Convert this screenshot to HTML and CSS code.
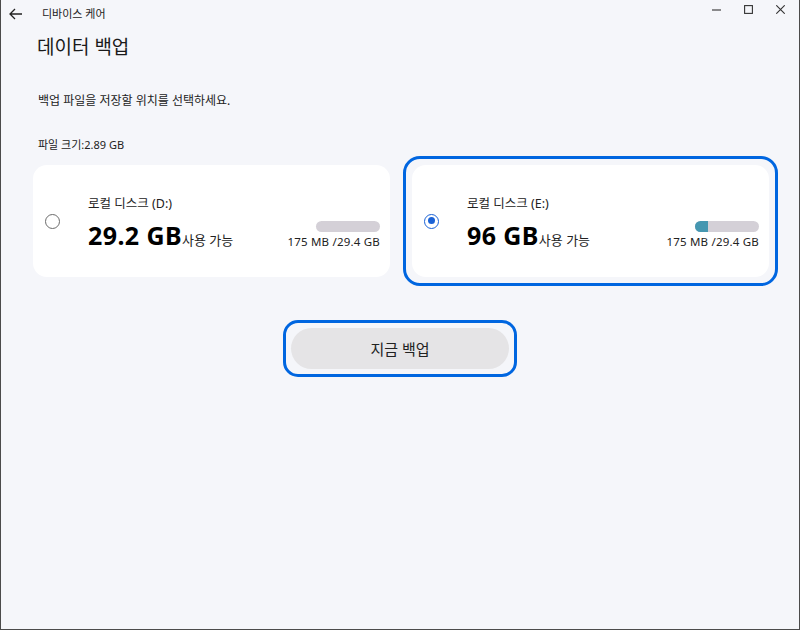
FILE: index.html
```html
<!DOCTYPE html>
<html lang="ko">
<head>
<meta charset="utf-8">
<title>디바이스 케어</title>
<link rel="stylesheet" href="styles.css">
</head>
<body>
<div class="window">
  <header class="titlebar">
    <div class="tb-left">
      <svg class="back" width="14" height="12" viewBox="0 0 14 12"><path d="M13 6H1.5M6 1L1 6l5 5" fill="none" stroke="#222" stroke-width="1.3"/></svg>
      <span class="apptitle">디바이스 케어</span>
    </div>
    <div class="controls">
      <span class="ctl"><svg width="9" height="9" viewBox="0 0 9 9"><path d="M0 5h9" stroke="#444" stroke-width="1.2"/></svg></span>
      <span class="ctl"><svg width="9" height="9" viewBox="0 0 9 9"><rect x="0.6" y="0.6" width="7.8" height="7.8" fill="none" stroke="#333" stroke-width="1.1"/></svg></span>
      <span class="ctl"><svg width="9" height="9" viewBox="0 0 9 9"><path d="M0.3 0.3l8.4 8.4M8.7 0.3l-8.4 8.4" stroke="#333" stroke-width="1.1"/></svg></span>
    </div>
  </header>
  <main class="content">
    <h1 class="title">데이터 백업</h1>
    <p class="desc">백업 파일을 저장할 위치를 선택하세요.</p>
    <p class="size">파일 크기:2.89 GB</p>
    <div class="cards">
      <div class="card">
        <span class="radio"></span>
        <div class="info">
          <div class="label">로컬 디스크 (D:)</div>
          <div class="free"><span class="big">29.2 GB</span><span class="avail">사용 가능</span></div>
        </div>
        <div class="usage">
          <div class="bar"></div>
          <div class="used">175 MB /29.4 GB</div>
        </div>
      </div>
      <div class="card selected">
        <span class="radio checked"></span>
        <div class="info">
          <div class="label">로컬 디스크 (E:)</div>
          <div class="free"><span class="big">96 GB</span><span class="avail">사용 가능</span></div>
        </div>
        <div class="usage">
          <div class="bar"><div class="fill" style="width:20%"></div></div>
          <div class="used">175 MB /29.4 GB</div>
        </div>
      </div>
    </div>
    <div class="actions">
      <button class="primary">지금 백업</button>
    </div>
  </main>
</div>
</body>
</html>
```
FILE: styles.css
```css
* { box-sizing: border-box; }
html, body { margin: 0; padding: 0; }
body {
  background: #f5f6fa;
  font-family: "Noto Sans", "Noto Sans CJK KR", sans-serif;
  color: #1f1f1f;
}
.window {
  width: 800px;
  height: 630px;
  border-left: 1px solid #4b4b4b;
  border-right: 1px solid #4b4b4b;
  border-bottom: 1px solid #4b4b4b;
  background: #f5f6fa;
}
.titlebar {
  height: 26px;
  display: flex;
  align-items: center;
  justify-content: space-between;
}
.tb-left { display: flex; align-items: center; }
.back { margin-left: 8px; margin-top: 1px; }
.apptitle {
  margin-left: 19px;
  font-size: 11px;
  color: #222;
}
.controls { display: flex; align-items: center; margin-top: -8px; margin-right: 3px; }
.ctl { width: 32px; display: flex; justify-content: center; }
.content { padding: 0 0 0 32px; }
.title {
  margin: 7px 0 0 4px;
  font-size: 19px;
  font-weight: 400;
  line-height: 28px;
  color: #1a1a1a;
}
.desc {
  margin: 32px 0 0 5px;
  font-size: 12px;
  line-height: 16px;
  color: #222;
}
.size {
  margin: 28px 0 0 5px;
  font-size: 11px;
  line-height: 16px;
  color: #222;
}
.cards {
  display: flex;
  gap: 22px;
  margin-top: 12px;
}
.card {
  width: 357px;
  height: 112px;
  background: #fff;
  border-radius: 14px;
  display: flex;
  align-items: center;
  padding: 0 10px 0 12px;
  position: relative;
}
.card.selected::after {
  content: "";
  position: absolute;
  inset: -9px;
  border: 3px solid #0066e0;
  border-radius: 17px;
  pointer-events: none;
}
.radio {
  width: 15px;
  height: 15px;
  border: 1.5px solid #6b6b6b;
  border-radius: 50%;
  flex: none;
  position: relative;
  margin-top: 0;
}
.radio.checked { border-color: #1a62d6; border-width: 1.6px; }
.radio.checked::after {
  content: "";
  position: absolute;
  left: 2.5px; top: 2.5px;
  width: 7px; height: 7px;
  border-radius: 50%;
  background: #1a62d6;
}
.info { margin-left: 28px; flex: 1; padding-top: 2px; }
.label {
  font-size: 12.5px;
  line-height: 16px;
  color: #222;
}
.free {
  margin-top: 9px;
  display: flex;
  align-items: baseline;
}
.big {
  font-size: 25px;
  font-weight: 700;
  line-height: 28px;
  letter-spacing: 0.4px;
  color: #000;
}
.avail { font-size: 13px; color: #222; }
.usage {
  display: flex;
  flex-direction: column;
  align-items: flex-end;
  margin-top: 28px;
}
.bar {
  width: 64px;
  height: 11px;
  border-radius: 6px;
  background: #d4d0d7;
  overflow: hidden;
}
.fill { height: 100%; background: #4597b1; }
.used {
  margin-top: 3px;
  font-size: 11.5px;
  line-height: 14px;
  letter-spacing: 0.2px;
  color: #222;
}
.actions {
  display: flex;
  justify-content: center;
  margin: 51px 0 0 -32px;
}
.primary {
  width: 218px;
  height: 41px;
  border: none;
  border-radius: 21px;
  background: #e5e4e6;
  font-family: "Noto Sans", "Noto Sans CJK KR", sans-serif;
  font-size: 15px;
  color: #222;
  position: relative;
}
.primary::after {
  content: "";
  position: absolute;
  inset: -8px;
  border: 3px solid #0066e0;
  border-radius: 15px;
  pointer-events: none;
}
```
